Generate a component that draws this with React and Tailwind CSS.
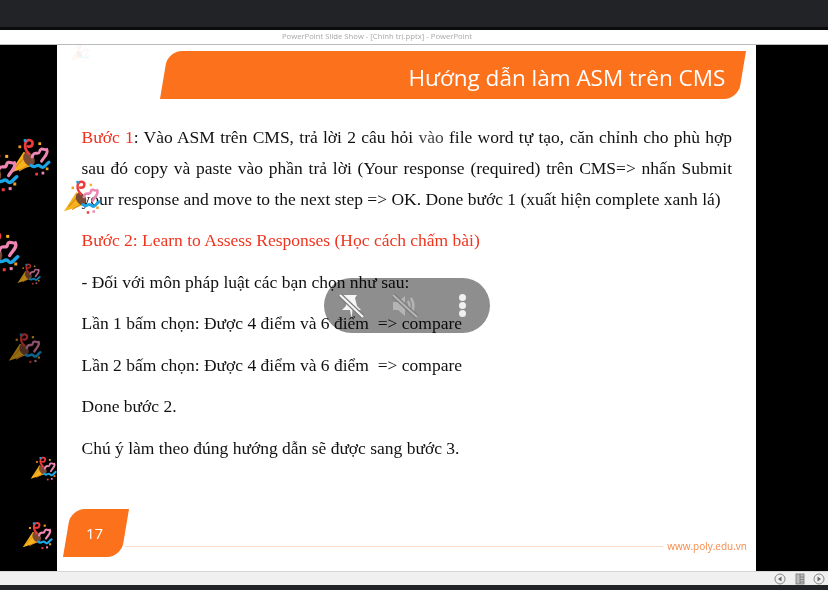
const confetti = [
  { x: 70, y: 43, size: 20, opacity: 0.07 },
  { x: 9, y: 136, size: 42, opacity: 1 },
  { x: -27, y: 148, size: 46, opacity: 1 },
  { x: 63, y: 178, size: 38, opacity: 1 },
  { x: -26, y: 228, size: 46, opacity: 1 },
  { x: 17, y: 262, size: 24, opacity: 0.75 },
  { x: 8, y: 331, size: 34, opacity: 0.6 },
  { x: 30, y: 455, size: 27, opacity: 1 },
  { x: 22, y: 520, size: 31, opacity: 1 },
];

function Popper({ x, y, size, opacity }) {
  return (
    <svg
      className="absolute"
      style={{ left: x, top: y, opacity }}
      width={size}
      height={size}
      viewBox="0 0 40 40"
      fill="none"
      strokeLinecap="round"
    >
      <path d="M1 35 L14 15 Q23 19 23 28 Z" fill="#f6b21b" />
      <path d="M6 30 L17 18 M10 33 L22 26" stroke="#dd8c12" strokeWidth="1.2" />
      <ellipse cx="19" cy="22" rx="5" ry="7" fill="#7a4a35" transform="rotate(-30 19 22)" />
      <path d="M19 17 C13 11 15 3 20 4 C24 5 23 11 18 10" stroke="#ee3b3b" strokeWidth="2.6" />
      <path d="M22 20 C24 13 28 19 29 15 C30 10 34 14 36 13 C38 17 33 20 31 24" stroke="#ee86b4" strokeWidth="2.8" />
      <path d="M21 28 C25 32 27 25 30 29 C33 32 35 27 38 25" stroke="#1ba5e5" strokeWidth="3" />
      <rect x="9" y="9" width="2.6" height="2.6" fill="#f09a1a" />
      <rect x="14" y="3" width="2.6" height="2.6" fill="#1ba5e5" />
      <rect x="28" y="6" width="2.6" height="2.6" fill="#f6b21b" />
      <rect x="25" y="35" width="2.6" height="2.6" fill="#ee3b3b" />
      <rect x="31" y="34" width="2.6" height="2.6" fill="#ee86b4" />
      <rect x="35" y="30" width="2.6" height="2.6" fill="#f09a1a" />
    </svg>
  );
}

function NavIcon({ kind }) {
  if (kind === "menu") {
    return (
      <svg width="12" height="12" viewBox="0 0 12 12">
        <rect x="2" y="1" width="8" height="10" fill="#bdbdbd" stroke="#777" strokeWidth="0.8" />
        <path d="M6 1 V11 M6 4 H10 M6 6.5 H10 M6 9 H10" stroke="#777" strokeWidth="0.8" />
      </svg>
    );
  }
  return (
    <svg width="12" height="12" viewBox="0 0 12 12" fill="none">
      <circle cx="6" cy="6" r="5" stroke="#888" />
      <path d={kind === "prev" ? "M7.5 3.5 V8.5 L4 6 Z" : "M4.5 3.5 V8.5 L8 6 Z"} fill="#666" />
    </svg>
  );
}

export default function App() {
  return (
    <div className="relative flex h-[590px] w-[828px] flex-col overflow-hidden bg-black font-['Liberation_Serif',serif] blur-[0.35px]">
      <div className="h-[27px] bg-[#222327]" />
      <div className="h-[3px] bg-[#0b0b0c]" />
      <div className="flex h-[15px] items-center justify-center border-b border-[#b9bdbd] bg-white pr-[74px] font-['Open_Sans',sans-serif] text-[7.7px] text-[#a8a8a8]">
        PowerPoint Slide Show - [Chính trị.pptx] - PowerPoint
      </div>

      <div className="flex h-[526px] bg-black">
        <div className="w-[57px]" />
        <div className="flex w-[699px] flex-col bg-white">
          <div className="mt-[6px] ml-[107px] flex h-[48px] w-[578px] -skew-x-[9.5deg] items-center justify-end rounded-tl-[14px] rounded-br-[14px] bg-[#fc711c] pt-[6px] pr-[16px]">
            <span className="skew-x-[9.5deg] font-['Open_Sans',sans-serif] text-[22.5px] text-white">
              Hướng dẫn làm ASM trên CMS
            </span>
          </div>

          <div className="mt-[23px] pr-[24px] pl-[24.5px] text-[17.5px] leading-[31px] text-[#111]">
            <p className="text-justify">
              <span className="text-[#f0301f]">Bước 1</span>: Vào ASM trên CMS, trả lời 2 câu hỏi <span className="text-[#444]">vào</span> file word tự tạo, căn chỉnh cho phù hợp sau đó copy và paste vào phần trả lời (Your response (required) trên CMS=&gt; nhấn Submit your response and move to the next step =&gt; OK. Done bước 1 (xuất hiện complete xanh lá)
            </p>
            <div className="mt-[10px] flex flex-col gap-[10.5px]">
              <p className="text-[#f0351f]">Bước 2: Learn to Assess Responses (Học cách chấm bài)</p>
              <p>- Đối với môn pháp luật các bạn chọn như sau:</p>
              <p>Lần 1 bấm chọn: Được 4 điểm và 6 điểm&nbsp; =&gt; compare</p>
              <p>Lần 2 bấm chọn: Được 4 điểm và 6 điểm&nbsp; =&gt; compare</p>
              <p>Done bước 2.</p>
              <p>Chú ý làm theo đúng hướng dẫn sẽ được sang bước 3.</p>
            </div>
          </div>

          <div className="mt-auto mb-[14px] flex items-center">
            <div className="ml-[10px] flex h-[48px] w-[58px] shrink-0 -skew-x-[9.5deg] items-center justify-center rounded-tl-[14px] rounded-br-[14px] bg-[#fc711c] pr-[2px]">
              <span className="skew-x-[9.5deg] font-['Open_Sans',sans-serif] text-[15px] text-white">17</span>
            </div>
            <div className="mt-[26px] flex flex-1 items-center">
              <div className="h-px flex-1 bg-[#fcdcc6]" />
              <span className="mr-[9px] ml-[4px] font-['Open_Sans',sans-serif] text-[10px] text-[#f58a4b]">www.poly.edu.vn</span>
            </div>
          </div>
        </div>
      </div>

      <div className="flex h-[14px] items-center justify-end gap-[7.5px] border-t border-[#d6d6d6] bg-[#f0f0f0] pr-[3px]">
        <NavIcon kind="prev" />
        <NavIcon kind="menu" />
        <NavIcon kind="next" />
      </div>
      <div className="flex-1 bg-[#222327]" />

      {confetti.map((c, i) => (
        <Popper key={i} {...c} />
      ))}

      {/* floating call controls, the slide text stays dark under the pill */}
      <div className="absolute top-[278px] left-[324px] flex h-[55px] w-[166px] items-center pl-[14px]">
        <div className="absolute inset-0 rounded-full bg-[#8e8e8e] mix-blend-multiply" />
        <svg className="relative" width="26" height="26" viewBox="0 0 26 26" fill="none">
          <path d="M5 2 H19 L17 5 L19 13 L23 17 H14.5 L13.5 25 L12 17 H4 L8 13 L8 5 Z" fill="#f6f6f6" />
          <path d="M2 2 L25 24" stroke="#7c7c7c" strokeWidth="4.5" />
          <path d="M2 2 L25 24" stroke="#f6f6f6" strokeWidth="2.2" />
        </svg>
        <svg className="relative ml-[27px]" width="28" height="26" viewBox="0 0 28 26" fill="none">
          <path d="M2 9 H7 L14 3 V23 L7 17 H2 Z" fill="#b4b4b4" />
          <path d="M17 8 Q20 13 17 18 M20 5 Q25 13 20 21" stroke="#b4b4b4" strokeWidth="2.4" />
          <path d="M2 2 L26 24" stroke="#7c7c7c" strokeWidth="4.5" />
          <path d="M2 2 L26 24" stroke="#b4b4b4" strokeWidth="2.2" />
        </svg>
        <div className="relative ml-[40px] flex flex-col gap-[1px]">
          <span className="size-[7px] rounded-full bg-[#f0f0f0]" />
          <span className="size-[7px] rounded-full bg-[#f0f0f0]" />
          <span className="size-[7px] rounded-full bg-[#f0f0f0]" />
        </div>
      </div>
    </div>
  );
}
